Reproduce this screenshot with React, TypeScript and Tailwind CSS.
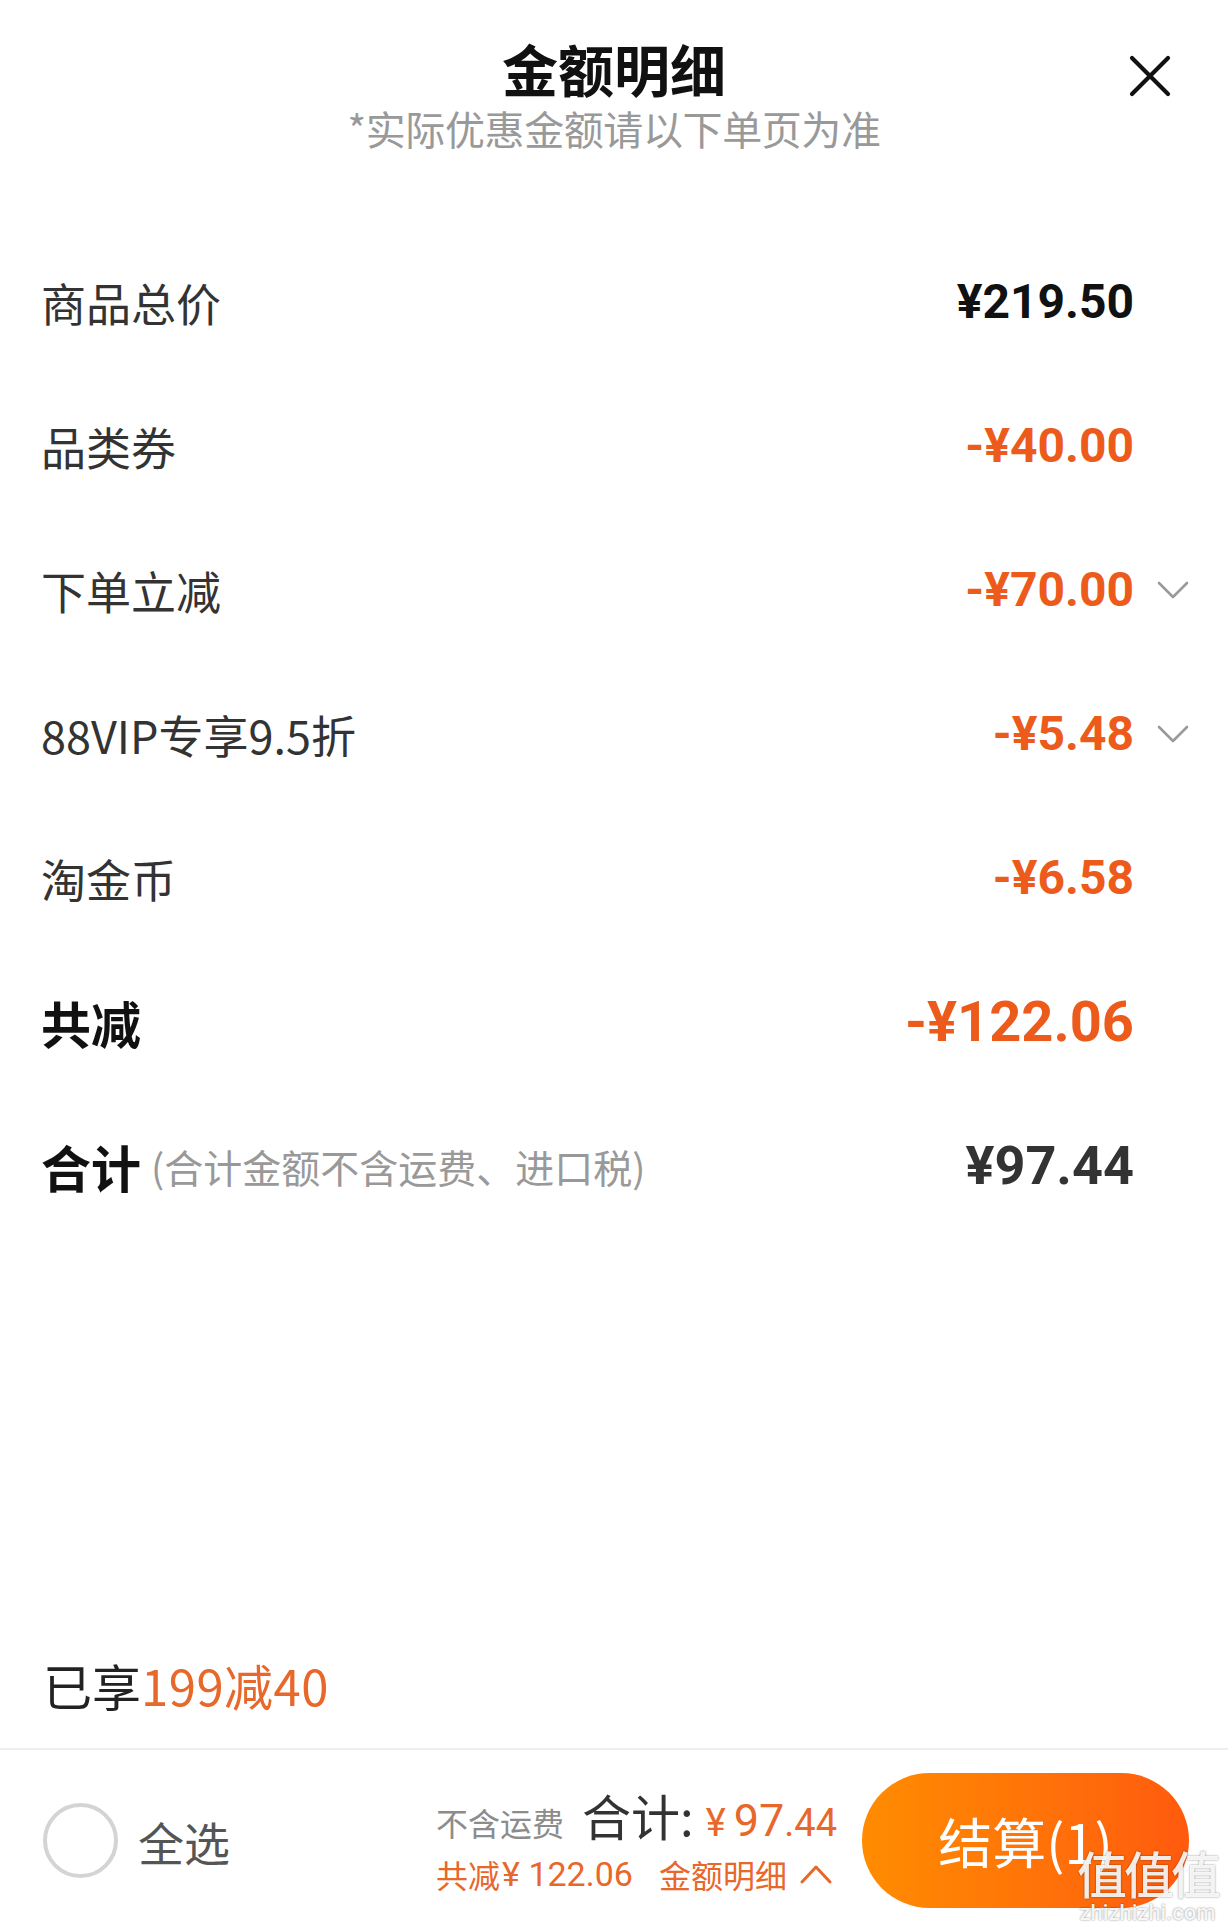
import React from 'react';

const cjk = "font-['Noto_Sans_CJK_SC','Noto_Sans',sans-serif]";
const num = "font-['Roboto','Liberation_Sans',sans-serif]";

interface Line {
  label: string;
  amount: string;
  minus?: boolean;
  expandable?: boolean;
}

const lines: Line[] = [
  { label: '商品总价', amount: '¥219.50' },
  { label: '品类券', amount: '-¥40.00', minus: true },
  { label: '下单立减', amount: '-¥70.00', minus: true, expandable: true },
  { label: '88VIP专享9.5折', amount: '-¥5.48', minus: true, expandable: true },
  { label: '淘金币', amount: '-¥6.58', minus: true },
];

function ChevronDown() {
  return (
    <svg width="32" height="20" viewBox="0 0 32 20" fill="none">
      <path d="M2 3L16 17L30 3" stroke="#999" strokeWidth="2.6" strokeLinecap="round" strokeLinejoin="round" />
    </svg>
  );
}

function ChevronUp() {
  return (
    <svg width="34" height="20" viewBox="0 0 34 20" fill="none">
      <path d="M3 18L17 3L31 18" stroke="#e8672a" strokeWidth="3" strokeLinecap="round" strokeLinejoin="round" />
    </svg>
  );
}

function Row({ children, right, chevron }: { children: React.ReactNode; right: React.ReactNode; chevron?: boolean }) {
  return (
    <div className="h-[144px] flex items-center pl-[41px] pr-[39px]">
      <div className="flex-1 flex items-center">{children}</div>
      {right}
      <div className="w-[55px] flex justify-end">{chevron && <ChevronDown />}</div>
    </div>
  );
}

export default function App() {
  return (
    <div className={`w-[1228px] h-[1931px] bg-white flex flex-col relative overflow-hidden ${cjk}`}>
      {/* header */}
      <div className="relative pt-[40px] flex flex-col items-center">
        <h1 className="text-[56px] leading-[56px] font-bold text-[#111]">金额明细</h1>
        <p className="mt-[12px] text-[40px] leading-[40px] tracking-[-0.4px] text-[#999]">*实际优惠金额请以下单页为准</p>
        <button className="absolute right-[57px] top-[55px] w-[42px] h-[42px]">
          <svg width="42" height="42" viewBox="0 0 42 42" fill="none">
            <path d="M3 3L39 39M39 3L3 39" stroke="#111" strokeWidth="4.2" strokeLinecap="round" />
          </svg>
        </button>
      </div>

      {/* breakdown */}
      <div className="mt-[82px]">
        {lines.map((l) => (
          <Row
            key={l.label}
            chevron={l.expandable}
            right={
              <span className={`${num} text-[48px] leading-none font-bold ${l.minus ? 'text-[#ec5b1c]' : 'text-[#111]'}`}>
                {l.amount}
              </span>
            }
          >
            <span className="text-[45px] leading-none text-[#333]">{l.label}</span>
          </Row>
        ))}
        <Row right={<span className={`${num} text-[56px] leading-none font-bold text-[#ec5b1c]`}>-¥122.06</span>}>
          <span className="text-[50px] leading-none font-bold text-[#111]">共减</span>
        </Row>
        <Row right={<span className={`${num} text-[54px] leading-none font-bold text-[#333]`}>¥97.44</span>}>
          <span className="text-[50px] leading-none font-bold text-[#111]">合计</span>
          <span className="ml-[10px] text-[39px] leading-none text-[#999]">(合计金额不含运费、进口税)</span>
        </Row>
      </div>

      {/* footer */}
      <div className="mt-auto">
        <div className="h-[72px] flex items-center pl-[43px] text-[49px] leading-none">
          <span className="text-[#222]">已享</span>
          <span className="text-[#e8672a] tracking-[0.5px]">199减40</span>
        </div>
        <div className="mt-[28px] h-[2px] bg-[#eeeeee]" />
        <div className="h-[181px] flex items-center pl-[43px] pr-[39px]">
          <div className="w-[75px] h-[75px] rounded-full border-[4px] border-[#d4d4d4]" />
          <span className="ml-[20px] text-[46px] leading-none text-[#555]">全选</span>

          <div className="ml-auto flex flex-col gap-[14px]">
            <div className="flex items-baseline">
              <span className="text-[32px] leading-none text-[#8c8c8c]">不含运费</span>
              <span className="ml-[18px] text-[49px] leading-none text-[#333]">合计:</span>
              <span className={`${num} ml-[12px] text-[#e8672a] leading-none`}>
                <span className="text-[38px]">¥</span>
                <span className="ml-[8px] text-[45px]">97</span>
                <span className="text-[38px]">.44</span>
              </span>
            </div>
            <div className="flex items-center text-[32px] leading-none text-[#e8672a]">
              <span>共减</span>
              <span className={`${num} ml-[2px] text-[34px]`}>¥ 122.06</span>
              <span className="ml-[26px]">金额明细</span>
              <span className="ml-[12px]"><ChevronUp /></span>
            </div>
          </div>

          <button className="ml-[25px] w-[327px] h-[135px] rounded-full bg-gradient-to-r from-[#ff8c00] to-[#ff5a0e] text-white text-[54px] leading-none">
            结算(1)
          </button>
        </div>
      </div>

      {/* watermark */}
      <div className="absolute right-[10px] bottom-[8px] flex flex-col items-center text-white/90 pointer-events-none [text-shadow:0_0_2px_rgba(0,0,0,0.5)]">
        <span className="text-[50px] leading-[50px] font-medium tracking-[-3px]">值值值</span>
        <span className={`${num} mt-[6px] text-[22px] leading-[20px] font-medium`}>zhizhizhi.com</span>
      </div>
    </div>
  );
}
